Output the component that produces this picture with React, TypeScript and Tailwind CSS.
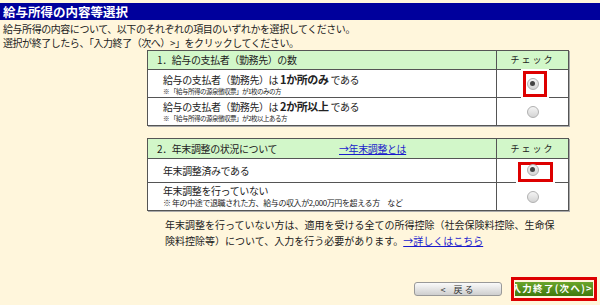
import React from "react";

const Radio = ({ checked }: { checked?: boolean }) => (
  <div className="w-[12px] h-[12px] rounded-full border border-[#b0b0b0] bg-gradient-to-b from-[#f4f4f4] to-[#d4d4d4] flex items-center justify-center">
    {checked && <div className="w-[5px] h-[5px] rounded-full bg-[#444]" />}
  </div>
);

const CheckCell = ({
  checked,
  focus,
}: {
  checked?: boolean;
  focus?: "a" | "b";
}) => (
  <div className="relative border-l border-[#555] flex items-center justify-center">
    {focus === "a" && (
      <div className="absolute left-[26px] top-[1px] w-[24px] h-[26px] border-[3px] border-[#dd0000] shadow-[0_0_0_2px_#fff]" />
    )}
    {focus === "b" && (
      <div className="absolute left-[21px] top-[3px] w-[35px] h-[20px] border-[3px] border-[#dd0000] shadow-[0_0_0_2px_#fff]" />
    )}
    <div className={focus === "b" ? "relative -mt-[2px]" : "relative"}>
      <Radio checked={checked} />
    </div>
  </div>
);

const App = () => {
  return (
    <div className="w-[600px] h-[305px] overflow-hidden bg-[#fff6dc] pt-[3px] text-[#222] font-['Noto_Sans_CJK_JP','Noto_Sans',sans-serif]">
      <div className="h-[17px] bg-[#00009c] text-white font-bold text-[12.5px] leading-[17px] pl-[3px]">
        給与所得の内容等選択
      </div>

      <div className="pl-[3px] mt-[2px] text-[10px] leading-[14px] tracking-[-0.45px]">
        <div>給与所得の内容について、以下のそれぞれの項目のいずれかを選択してください。</div>
        <div>選択が終了したら、「入力終了（次へ）&gt;」をクリックしてください。</div>
      </div>

      {/* 1. 支払者の数 */}
      <div className="ml-[147px] w-[422px] border border-[#555] shadow-[1px_1px_0_#aaa] bg-white text-[10px]">
        <div className="grid grid-cols-[348px_1fr] h-[19px] bg-[#d2f7c9] border-b border-[#555]">
          <div className="pl-[9px] leading-[18px] tracking-[-0.4px]">1．給与の支払者（勤務先）の数</div>
          <div className="border-l border-[#555] text-center text-[9px] leading-[18px] tracking-[2px]">チェック</div>
        </div>
        <div className="grid grid-cols-[348px_1fr] h-[28px] border-b border-[#555]">
          <div className="pl-[15px] pt-[3px]">
            <div className="leading-[12px] tracking-[-0.4px]">
              給与の支払者（勤務先）は <span className="font-bold text-[11px]">1か所のみ</span> である
            </div>
            <div className="mt-[1px] text-[6.5px] leading-[8px] tracking-[-0.5px]">※ 「給与所得の源泉徴収票」が1枚のみの方</div>
          </div>
          <CheckCell checked focus="a" />
        </div>
        <div className="grid grid-cols-[348px_1fr] h-[27px]">
          <div className="pl-[15px] pt-[2px]">
            <div className="leading-[12px] tracking-[-0.4px]">
              給与の支払者（勤務先）は <span className="font-bold text-[11px]">2か所以上</span> である
            </div>
            <div className="mt-[1px] text-[6.5px] leading-[8px] tracking-[-0.5px]">※ 「給与所得の源泉徴収票」が2枚以上ある方</div>
          </div>
          <CheckCell />
        </div>
      </div>

      {/* 2. 年末調整 */}
      <div className="ml-[147px] mt-[12px] w-[422px] border border-[#555] shadow-[1px_1px_0_#aaa] bg-white text-[10px]">
        <div className="grid grid-cols-[348px_1fr] h-[20px] bg-[#d2f7c9] border-b border-[#555]">
          <div className="pl-[9px] leading-[19px] tracking-[-0.4px] flex">
            <span className="w-[182px]">2．年末調整の状況について</span>
            <span className="text-[#1a1acc] underline">→年末調整とは</span>
          </div>
          <div className="border-l border-[#555] text-center text-[9px] leading-[19px] tracking-[2px]">チェック</div>
        </div>
        <div className="grid grid-cols-[348px_1fr] h-[24px] border-b border-[#555]">
          <div className="pl-[15px] leading-[23px] tracking-[-0.4px]">年末調整済みである</div>
          <CheckCell checked focus="b" />
        </div>
        <div className="grid grid-cols-[348px_1fr] h-[27px]">
          <div className="pl-[15px] pt-[2px]">
            <div className="leading-[12px] tracking-[-0.4px]">年末調整を行っていない</div>
            <div className="mt-[1px] text-[8px] leading-[10px] tracking-[-0.4px]">
              ※ 年の中途で退職された方、給与の収入が2,000万円を超える方　など
            </div>
          </div>
          <CheckCell />
        </div>
      </div>

      <div className="pl-[165px] mt-[6px] text-[10px] leading-[16px]">
        <div>年末調整を行っていない方は、適用を受ける全ての所得控除（社会保険料控除、生命保</div>
        <div>
          険料控除等）について、入力を行う必要があります。
          <span className="text-[#1a1acc] underline">→詳しくはこちら</span>
        </div>
      </div>

      <div className="mt-[28px] flex items-center justify-end pr-[3px]">
        <div className="w-[88px] h-[14px] rounded-[3px] border border-[#999] bg-gradient-to-b from-[#fafafa] to-[#cfcfcf] flex items-center justify-center gap-[8px] text-[9px] leading-none text-[#333]">
          <span>&lt;</span>
          <span className="tracking-[2px]">戻る</span>
        </div>
        <div className="ml-[9px] w-[86px] h-[24px] border-[3px] border-[#dd0000] p-[1px] flex items-center">
          <div className="w-full h-[14px] bg-gradient-to-b from-[#6aa52a] to-[#3f7a0c] flex items-center justify-end overflow-hidden whitespace-nowrap text-white font-bold text-[9.5px] leading-none tracking-[1.3px]">
            入力終了(次へ)&gt;
          </div>
        </div>
      </div>
    </div>
  );
};

export default App;
